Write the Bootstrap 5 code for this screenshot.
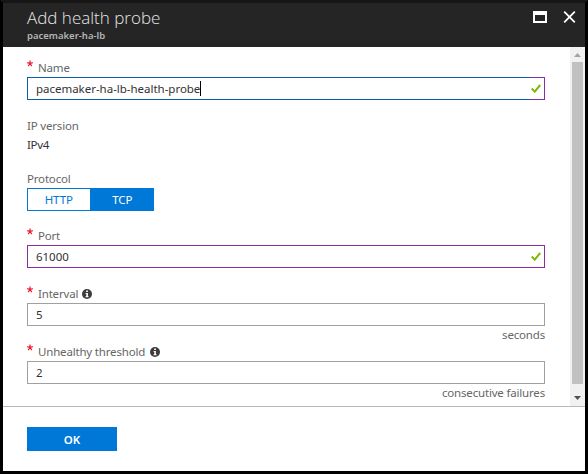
<!DOCTYPE html>
<html lang="en">
<head>
<meta charset="utf-8">
<meta name="viewport" content="width=device-width, initial-scale=1">
<title>Add health probe</title>
<link href="https://cdn.jsdelivr.net/npm/bootstrap@5.3.0/dist/css/bootstrap.min.css" rel="stylesheet">
<style>
body{font-family:"Noto Sans","Open Sans",sans-serif;font-size:11.5px;line-height:18px;color:#333;overflow:hidden}
.blade{height:474px;border:3px solid #000;border-top-color:#161616;background:#fff}
.blade-head{height:44px;background:#252525;padding:4px 9px 0 24px}
.blade-title{font-family:"Open Sans",sans-serif;font-weight:300;font-size:17px;line-height:22px;color:#e6e6e6;margin:0}
.blade-sub{font-size:9.5px;line-height:13px;font-weight:600;color:#b4b4b4}
.blade-body{height:359px}
.fields{padding:12px 25px 0 24px}
.lbl{height:18px;line-height:18px;color:#666;letter-spacing:-.18px;display:flex;align-items:center}
.spaced{margin-top:17px}
.ipv{height:19px;line-height:20px;letter-spacing:-.3px}
.req{width:11px;height:18px;flex:none}
.info{margin-left:5px;margin-bottom:1px}
.lbl-short .info{margin-left:4px}
.box{height:23px;border:1px solid #a0a0a0;border-radius:0;padding:0 3px 0 8px;line-height:21px;letter-spacing:-.02px;color:#333;background:#fff}
.box-valid{border-color:#8a2da5}
.box-focus{background:linear-gradient(#fff,#fff) padding-box,linear-gradient(90deg,#0f5ba5 504px,#8a2da5 504px) border-box;border-color:transparent}
.caret{width:1px;height:15px;margin-bottom:1px;background:#000}
.hint{height:17px;line-height:18px;color:#666;letter-spacing:-.18px;text-align:right}
.switch{width:127px;height:23px}
.switch .btn,.ok{border-radius:0;padding:0;font-size:11.5px;line-height:22px;border:1px solid #0078d7;color:#0078d7}
.switch .btn.active,.ok,.ok:hover{background:#0078d7;border-color:#0078d7;color:#fff}
.switch .btn{letter-spacing:-.1px}
.rail{width:15px;background:#f1f1f1}
.thumb{width:11px;margin-right:1px;background:#c1c1c1}
.blade-foot{height:65px;border-top:1px solid #b8b8b8;padding:20px 24px}
.ok{width:90px;height:24px;font-weight:600;line-height:24px}
</style>
</head>
<body>
<svg class="d-none">
<symbol id="star" viewBox="0 0 11 18"><path d="M3 4.500V1.500M3 4.500L.2 3.600M3 4.500l2.800-.9M3 4.500L1.200 7.100M3 4.500l1.800 2.600" stroke="#f0142d" stroke-width="1.2" fill="none"/></symbol>
<symbol id="info" viewBox="0 0 10 10"><circle cx="5" cy="5" r="5" fill="#3c3c3c"/><path d="M4.2 1.6h1.7v1.5H4.2zM3.6 4h2.3v3.3h.7v.9H3.5v-.9h.8V4.9h-.7z" fill="#fff"/></symbol>
<symbol id="tick" viewBox="0 0 10 9"><path d="M.7 4.5L3.8 7.600 9.200 1" stroke="#7fba00" stroke-width="2" fill="none"/></symbol>
</svg>
<main class="blade d-flex flex-column">
  <header class="blade-head d-flex justify-content-between align-items-start">
    <div>
      <h1 class="blade-title">Add health probe</h1>
      <div class="blade-sub">pacemaker-ha-lb</div>
    </div>
    <div class="d-flex mt-1">
      <svg width="14" height="12" class="me-3" viewBox="0 0 14 12"><path fill="#fff" fill-rule="evenodd" d="M0 0h14v12H0zM2 4v6h10V4z"/></svg>
      <svg width="13" height="12" viewBox="0 0 13 12"><path d="M1.2.7L11.8 11.3M11.8.7L1.2 11.3" stroke="#fff" stroke-width="1.8"/></svg>
    </div>
  </header>
  <div class="blade-body d-flex">
    <form class="fields flex-grow-1">
      <div class="lbl"><svg class="req"><use href="#star"/></svg><span>Name</span></div>
      <div class="box box-focus d-flex align-items-center"><span>pacemaker-ha-lb-health-probe</span><i class="caret"></i><svg class="ms-auto" width="10" height="9"><use href="#tick"/></svg></div>
      <div class="lbl spaced"><span>IP version</span></div>
      <div class="ipv">IPv4</div>
      <div class="lbl mt-3"><span>Protocol</span></div>
      <div class="switch d-flex">
        <button type="button" class="btn w-50">HTTP</button><button type="button" class="btn w-50 active">TCP</button>
      </div>
      <div class="lbl mt-3"><svg class="req"><use href="#star"/></svg><span>Port</span></div>
      <div class="box box-valid d-flex align-items-center"><span>61000</span><svg class="ms-auto" width="10" height="9"><use href="#tick"/></svg></div>
      <div class="lbl lbl-short spaced"><svg class="req"><use href="#star"/></svg><span>Interval</span><svg class="info" width="10" height="10"><use href="#info"/></svg></div>
      <div class="box">5</div>
      <div class="hint">seconds</div>
      <div class="lbl"><svg class="req"><use href="#star"/></svg><span>Unhealthy threshold</span><svg class="info" width="10" height="10"><use href="#info"/></svg></div>
      <div class="box">2</div>
      <div class="hint">consecutive failures</div>
    </form>
    <div class="rail d-flex flex-column align-items-center">
      <svg width="15" height="15"><path d="M4 10l3.5-4 3.5 4z" fill="#a3a3a3"/></svg>
      <div class="thumb flex-grow-1"></div>
      <svg width="15" height="22"><path d="M4 12h7l-3.500 4z" fill="#505050"/></svg>
    </div>
  </div>
  <footer class="blade-foot"><button type="button" class="btn ok d-block">OK</button></footer>
</main>
<script src="https://cdn.jsdelivr.net/npm/bootstrap@5.3.0/dist/js/bootstrap.bundle.min.js"></script>
</body>
</html>
